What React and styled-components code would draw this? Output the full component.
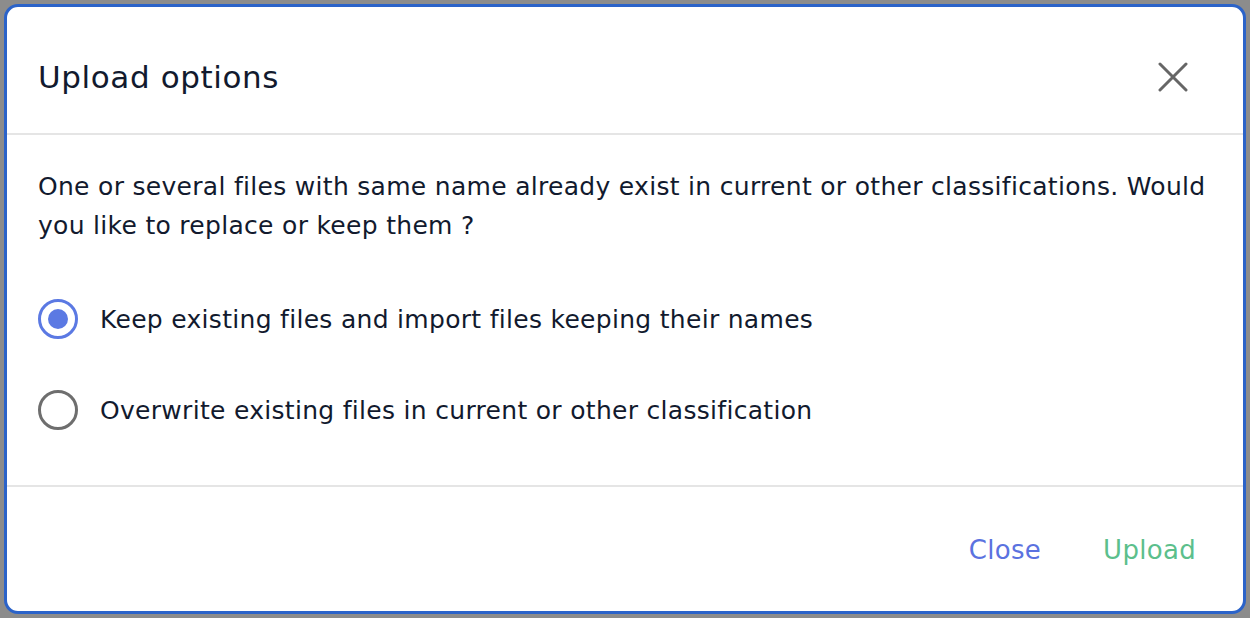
import React, { useState } from "react";
import styled, { createGlobalStyle } from "styled-components";

const GlobalStyle = createGlobalStyle`
  html, body {
    margin: 0;
    padding: 0;
    background: #8c8c8c;
  }
  * {
    box-sizing: border-box;
  }
`;

const Backdrop = styled.div`
  height: 618px;
  padding: 4px;
  font-family: "DejaVu Sans", "Noto Sans", sans-serif;
  color: #121a2e;
  letter-spacing: 0.3px;
`;

const Modal = styled.div`
  height: 100%;
  display: flex;
  flex-direction: column;
  background: #ffffff;
  border: 3px solid #2b63c9;
  border-radius: 14px;
  overflow: hidden;
`;

const Header = styled.div`
  height: 128px;
  display: flex;
  align-items: center;
  justify-content: space-between;
  padding: 14px 50px 0 31px;
  border-bottom: 2px solid #e5e5e5;
`;

const Title = styled.h2`
  margin: 0;
  font-size: 31px;
  font-weight: 400;
  letter-spacing: 0.6px;
`;

const CloseIcon = styled.button`
  width: 40px;
  height: 40px;
  display: flex;
  align-items: center;
  justify-content: center;
  border: none;
  background: none;
  padding: 0;
  cursor: pointer;
`;

const Body = styled.div`
  flex: 1;
  padding: 32px 31px 0 31px;
  border-bottom: 2px solid #e5e5e5;
`;

const Message = styled.p`
  margin: 0 0 54px 0;
  font-size: 25px;
  line-height: 39px;
`;

const Options = styled.div`
  display: flex;
  flex-direction: column;
  gap: 51px;
`;

const Option = styled.label`
  display: flex;
  align-items: center;
  gap: 22px;
  height: 40px;
  font-size: 25px;
  cursor: pointer;
`;

const Radio = styled.span`
  width: 40px;
  height: 40px;
  border-radius: 50%;
  border: 3px solid ${(p) => (p.checked ? "#5b79e3" : "#6e6e6e")};
  display: flex;
  align-items: center;
  justify-content: center;
  flex-shrink: 0;
  &::after {
    content: "";
    width: 20px;
    height: 20px;
    border-radius: 50%;
    background: #5b79e3;
    display: ${(p) => (p.checked ? "block" : "none")};
  }
`;

const Footer = styled.div`
  height: 124px;
  display: flex;
  align-items: center;
  justify-content: flex-end;
  gap: 62px;
  padding: 2px 47px 0 31px;
`;

const TextButton = styled.button`
  border: none;
  background: none;
  padding: 0;
  font-family: inherit;
  font-size: 26px;
  letter-spacing: 0.3px;
  color: ${(p) => p.color};
  cursor: pointer;
`;

const options = [
  { id: "keep", label: "Keep existing files and import files keeping their names" },
  { id: "overwrite", label: "Overwrite existing files in current or other classification" },
];

const App = () => {
  const [choice, setChoice] = useState("keep");
  return (
    <>
      <GlobalStyle />
      <Backdrop>
        <Modal>
          <Header>
            <Title>Upload options</Title>
            <CloseIcon aria-label="close">
              <svg width="30" height="30" viewBox="0 0 30 30">
                <path
                  d="M2 2 L28 28 M28 2 L2 28"
                  stroke="#666"
                  strokeWidth="3"
                  strokeLinecap="round"
                />
              </svg>
            </CloseIcon>
          </Header>
          <Body>
            <Message>
              One or several files with same name already exist in current or
              other classifications. Would you like to replace or keep them ?
            </Message>
            <Options>
              {options.map((item) => (
                <Option key={item.id} onClick={() => setChoice(item.id)}>
                  <Radio checked={choice === item.id} />
                  {item.label}
                </Option>
              ))}
            </Options>
          </Body>
          <Footer>
            <TextButton color="#5b72e0">Close</TextButton>
            <TextButton color="#5cbf8c">Upload</TextButton>
          </Footer>
        </Modal>
      </Backdrop>
    </>
  );
};

export default App;
